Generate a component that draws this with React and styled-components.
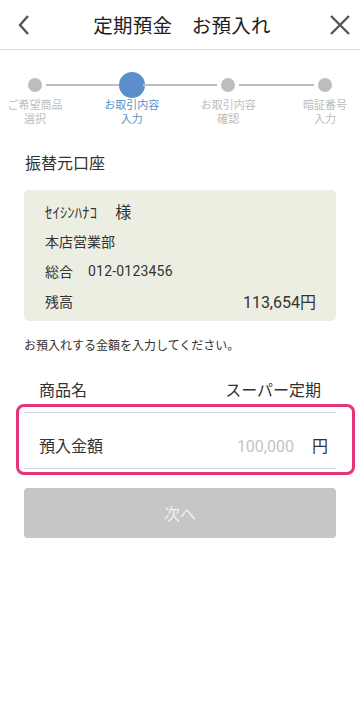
import React from 'react'
import styled, { createGlobalStyle } from 'styled-components'

const GlobalStyle = createGlobalStyle`
  html, body {
    margin: 0;
    padding: 0;
    background: #fff;
    font-family: Roboto, "Noto Sans CJK JP", sans-serif;
    color: #333;
  }
  * { box-sizing: border-box; }
`

const steps = [
  { label: ['ご希望商品', '選択'] },
  { label: ['お取引内容', '入力'], active: true },
  { label: ['お取引内容', '確認'] },
  { label: ['暗証番号', '入力'] },
]

export default function App() {
  return (
    <Page>
      <GlobalStyle />
      <Header>
        <IconButton aria-label="back">
          <svg width="14" height="22" viewBox="0 0 14 22">
            <path d="M11 2 L3 11 L11 20" fill="none" stroke="#555" strokeWidth="2.4" />
          </svg>
        </IconButton>
        <Title>定期預金　お預入れ</Title>
        <IconButton aria-label="close">
          <svg width="22" height="22" viewBox="0 0 22 22">
            <path d="M2 2 L20 20 M20 2 L2 20" fill="none" stroke="#555" strokeWidth="2.4" />
          </svg>
        </IconButton>
      </Header>

      <Stepper>
        <DotRow>
          {steps.map((s, i) => (
            <React.Fragment key={i}>
              {i > 0 && <Connector />}
              <DotSlot>
                <Dot $active={s.active} />
              </DotSlot>
            </React.Fragment>
          ))}
        </DotRow>
        <LabelRow>
          {steps.map((s, i) => (
            <LabelSlot key={i}>
              <StepLabel $active={s.active}>
                {s.label[0]}
                <br />
                {s.label[1]}
              </StepLabel>
            </LabelSlot>
          ))}
        </LabelRow>
      </Stepper>

      <Content>
        <SectionTitle>振替元口座</SectionTitle>
        <AccountCard>
          <CardRow>
            <Kana>ｾｲｼﾝﾊﾅｺ</Kana>
            <Honorific>様</Honorific>
          </CardRow>
          <CardRow>本店営業部</CardRow>
          <CardRow>
            総合<AccountNo>012-0123456</AccountNo>
          </CardRow>
          <CardRow $split>
            <span>残高</span>
            <Balance>113,654円</Balance>
          </CardRow>
        </AccountCard>

        <Notice>お預入れする金額を入力してください。</Notice>

        <FormBlock>
          <FormRow>
            <span>商品名</span>
            <span>スーパー定期</span>
          </FormRow>
          <FormRow $amount>
            <span>預入金額</span>
            <AmountField>
              <Placeholder>100,000</Placeholder>
              <span>円</span>
            </AmountField>
          </FormRow>
          <Highlight />
        </FormBlock>

        <NextButton disabled>次へ</NextButton>
      </Content>
    </Page>
  )
}

const Page = styled.div`
  width: 360px;
  min-height: 710px;
  background: #fff;
`

const Header = styled.header`
  height: 50px;
  display: flex;
  align-items: center;
  justify-content: space-between;
  padding: 0 8px 0 12px;
  border-bottom: 1px solid #d9d9d9;
`

const IconButton = styled.button`
  width: 24px;
  height: 30px;
  display: flex;
  align-items: center;
  justify-content: center;
  border: none;
  background: none;
  padding: 0;
`

const Title = styled.h1`
  margin: 0;
  font-size: 19.5px;
  font-weight: 400;
  color: #222;
  letter-spacing: 0.2px;
`

const Stepper = styled.div`
  padding: 22px 24px 0;
`

const DotRow = styled.div`
  display: flex;
  align-items: center;
  height: 26px;
`

const DotSlot = styled.div`
  width: 22px;
  display: flex;
  justify-content: center;
`

const Dot = styled.span`
  flex-shrink: 0;
  width: ${p => (p.$active ? '26px' : '14px')};
  height: ${p => (p.$active ? '26px' : '14px')};
  border-radius: 50%;
  background: ${p => (p.$active ? '#5b8fcc' : '#bdbdbd')};
`

const Connector = styled.span`
  flex: 1;
  height: 2px;
  background: #bdbdbd;
`

const LabelRow = styled.div`
  display: flex;
  justify-content: space-between;
  margin-top: 1px;
`

const LabelSlot = styled.div`
  width: 22px;
  display: flex;
  justify-content: center;
`

const StepLabel = styled.div`
  white-space: nowrap;
  text-align: center;
  font-size: 11px;
  line-height: 14px;
  color: ${p => (p.$active ? '#5b8fcc' : '#bdbdbd')};
`

const Content = styled.main`
  padding: 0 24px;
`

const SectionTitle = styled.h2`
  margin: 26px 0 0 1px;
  font-size: 16px;
  line-height: 22px;
  font-weight: 400;
  color: #333;
`

const AccountCard = styled.section`
  margin-top: 15px;
  background: #ebeee0;
  border-radius: 5px;
  padding: 6px 20px 5px 21px;
`

const CardRow = styled.div`
  height: 30px;
  display: flex;
  align-items: center;
  justify-content: ${p => (p.$split ? 'space-between' : 'flex-start')};
  font-size: 14px;
  color: #333;
`

const Kana = styled.span`
  font-size: 14.5px;
  letter-spacing: 0.2px;
`

const Honorific = styled.span`
  margin-left: 18px;
  font-size: 16px;
`

const AccountNo = styled.span`
  margin-left: 15px;
  font-size: 14px;
  letter-spacing: 0.2px;
`

const Balance = styled.span`
  font-size: 16px;
`

const Notice = styled.p`
  margin: 16px 0 0 0;
  font-size: 12px;
  line-height: 18px;
  color: #333;
`

const FormBlock = styled.div`
  position: relative;
  margin-top: 12px;
`

const FormRow = styled.div`
  display: flex;
  align-items: center;
  justify-content: space-between;
  padding: ${p => (p.$amount ? '22px 8px 9px 15px' : '12px 15px 9px 15px')};
  font-size: 16px;
  line-height: 24px;
  color: #333;
  border-bottom: 1px solid #d6d6d6;
`

const AmountField = styled.div`
  display: flex;
  align-items: center;
  gap: 18px;
`

const Placeholder = styled.span`
  color: #c4c4c4;
`

const Highlight = styled.div`
  position: absolute;
  top: 37px;
  left: -8px;
  right: -19px;
  bottom: -6px;
  border: 3.5px solid #e6327a;
  border-radius: 8px;
  pointer-events: none;
`

const NextButton = styled.button`
  display: block;
  width: 100%;
  height: 50px;
  margin-top: 19px;
  border: none;
  border-radius: 4px;
  background: #c6c6c6;
  color: #f2f2f2;
  font-family: Roboto, "Noto Sans CJK JP", sans-serif;
  font-size: 16px;
`
